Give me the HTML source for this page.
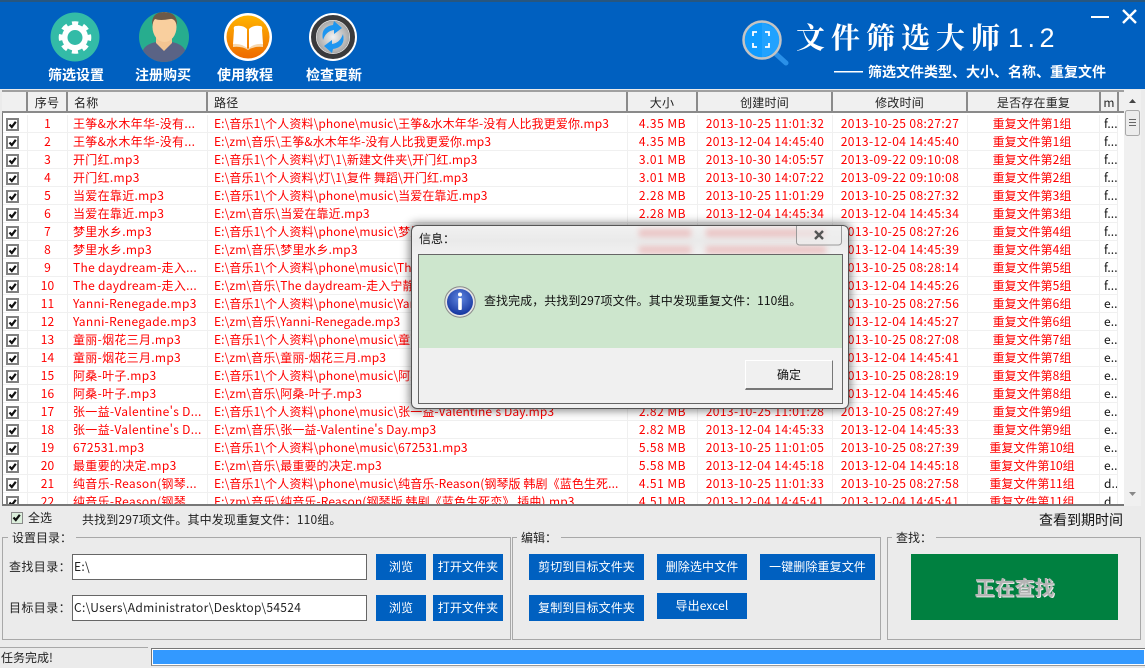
<!DOCTYPE html>
<html lang="zh"><head><meta charset="utf-8"><title>文件筛选大师</title>
<style>
*{box-sizing:border-box}
html,body{margin:0;padding:0;width:1145px;height:666px;overflow:hidden;background:#ebebeb;font-family:"Noto Sans CJK SC","Liberation Sans",sans-serif;font-size:12px;color:#111}
.a{position:absolute;white-space:nowrap}
#hd{left:0;top:0;width:1145px;height:89px;background:#0060c0}
.nav{color:#fff;font-size:14px;font-weight:700;top:65px;line-height:20px}
#hl{left:2px;top:90px;width:1122px;height:23px;background:#f0f0f0;border-top:2px solid #a0a0a0;border-bottom:2px solid #8a8a8a}
.hc{top:0;height:19px;line-height:21px;font-size:12px;border-right:2px solid #8a8a8a;text-align:center;letter-spacing:.2px;color:#222}
#grid{left:2px;top:113px;width:1139px;height:393px;background:#fff;border-left:1px solid #777;border-bottom:2px solid #777;overflow:hidden}
table{position:absolute;left:0;top:2px;border-collapse:separate;border-spacing:0;table-layout:fixed;width:1115px;color:#f00;letter-spacing:.1px}
td{height:18px;padding:0 0 0 6px;line-height:16px;border-right:1px solid #f0f0f0;border-bottom:1px solid #f0f0f0;overflow:hidden;white-space:nowrap;font-size:12px}
td.c{text-align:center;padding-left:0}
td.k{color:#111;padding-left:4px}
td.b{padding:0}
td:nth-child(3){letter-spacing:.3px;padding-left:5px}
td:nth-child(4){padding-left:6px}
td:nth-child(5){letter-spacing:.5px}
td:nth-child(6),td:nth-child(7){letter-spacing:.4px}
td:nth-child(8){letter-spacing:0;padding-right:3px}
.cb{display:block;width:13px;height:13px;margin:1px 0 0 3px;border:2px solid #808080;background:#fff}
.cb svg{display:block}
#sb{left:1124px;top:90px;width:17px;height:416px;background:#f0f0f0}
.fs{border:1px solid #a8a8a8;height:103px;top:537px}
.lg{background:#ebebeb;padding:0 4px;line-height:16px;top:530px;color:#222}
.btn{background:#0060c0;color:#fff;text-align:center;height:26px;line-height:25px;letter-spacing:.1px}
.inp{left:72px;width:295px;height:26px;border:1px solid #666;background:#fff;line-height:24px;padding-left:1px;letter-spacing:.3px;color:#222}
#dlg{left:411px;top:225px;width:438px;height:184px;border:1px solid #555;border-radius:6px;background:linear-gradient(#f1f1f1,#eaeaea 15px,#f1f1f1 29px);box-shadow:0 0 9px 2px rgba(0,0,0,.45);overflow:hidden}
.bl{background:#e9a4a4;filter:blur(3px);height:8px;opacity:.55}
</style></head><body>
<div class="a" style="left:0;top:0;width:1145px;height:2px;background:#27567f"></div>
<div class="a" id="hd" style="top:2px;height:87px"></div>

<svg class="a" style="left:0;top:0" width="1145" height="89" viewBox="0 0 1145 89">
<circle cx="75" cy="37" r="24.5" fill="#33bba7"/>
<circle cx="75" cy="37.5" r="10.3" fill="none" stroke="#fff" stroke-width="5.6"/>
<circle cx="75" cy="37.5" r="14.5" fill="none" stroke="#fff" stroke-width="3.6" stroke-dasharray="6.2 5.19" stroke-dashoffset="3.1"/>

<clipPath id="pc"><circle cx="164" cy="37" r="25"/></clipPath>
<circle cx="164" cy="37" r="25" fill="#27ad8e"/>
<g clip-path="url(#pc)">
<path d="M142 66 L143 50 Q146 44 156 42 L164 50 L172 42 Q182 44 185 50 L186 66Z" fill="#5a6385"/>
<path d="M156 36 L156 43 L164 51 L172 43 L172 36Z" fill="#f4c592"/>
<ellipse cx="164.500" cy="27" rx="12" ry="15" fill="#f9cf9e"/>
<path d="M152 26 Q151 12 164 12 Q178 12 177 26 Q175 18 170 19 Q160 21 155 19 Q153 21 152 26Z" fill="#6d5a48"/>
</g>

<defs><linearGradient id="og" x1="0" y1="0" x2="0" y2="1"><stop offset="0" stop-color="#ffb400"/><stop offset="1" stop-color="#ee6a00"/></linearGradient>
<radialGradient id="gr"><stop offset="0" stop-color="#f2f2f2"/><stop offset="1" stop-color="#a8a8a8"/></radialGradient></defs>
<circle cx="248" cy="37" r="24" fill="#fff"/>
<circle cx="248" cy="37" r="21.500" fill="url(#og)"/>
<path d="M234 30 Q233 26 236 26 Q243 25 247 29 L247 48 Q242 45 235 46 Q233 46 233 44Z M249 29 Q253 25 260 26 Q263 26 262 30 L263 44 Q263 46 261 46 Q254 45 249 48Z" fill="#fff"/>
<path d="M233 44 Q242 43 248 49 Q254 43 263 44 L263 47 Q254 46 248 50 Q242 46 233 47Z" fill="#f6d8b0"/>

<circle cx="333" cy="37" r="24" fill="#fff"/>
<circle cx="333" cy="37" r="19.500" fill="none" stroke="#3a3a3c" stroke-width="5"/>
<circle cx="333" cy="37" r="16.500" fill="url(#gr)"/>
<path d="M323 40 Q320 27 333 25 L334 21 L342 28 L334 34 L334 30 Q326 31 323 40Z" fill="#1e96f0"/>
<path d="M343 34 Q346 47 333 49 L332 53 L324 46 L332 40 L332 44 Q340 43 343 34Z" fill="#1e96f0"/>

<rect x="1091" y="16" width="18" height="2" fill="#fff"/>
<path d="M1123 10 L1136 23 M1136 10 L1123 23" stroke="#fff" stroke-width="2.4"/>

<path d="M776 54 L786 63" stroke="#2a90e8" stroke-width="5" stroke-linecap="round"/>
<circle cx="762" cy="40" r="18.500" fill="#0f9bff" stroke="#c4c4c4" stroke-width="2.500"/>
<path d="M762 22 L779 31 L779 50 L762 58Z" fill="#ffffff" opacity=".08"/>
<path d="M753 36 V32 H757 M765 32 H769 V36 M769 43 V47 H765 M757 47 H753 V43" fill="none" stroke="#fff" stroke-width="1.800"/>
<rect x="834" y="71" width="29" height="1.500" fill="#fff"/>
</svg>

<div class="a nav" style="left:48px">筛选设置</div>
<div class="a nav" style="left:135px">注册购买</div>
<div class="a nav" style="left:217px">使用教程</div>
<div class="a nav" style="left:306px">检查更新</div>
<div class="a" style="left:796px;top:17px;color:#fff;font-family:'Noto Serif CJK SC',serif;font-weight:700;font-size:29px;line-height:40px;letter-spacing:6px">文件筛选大师</div>
<div class="a" style="left:1008px;top:20px;color:#fff;font-family:'Liberation Sans',sans-serif;font-size:27px;line-height:36px;letter-spacing:4.500px">1.2</div>
<div class="a" style="left:868px;top:62px;color:#fff;font-weight:700;font-size:14px;line-height:20px">筛选文件类型、大小、名称、重复文件</div>

<div class="a" id="hl">
<div class="a hc" style="left:0;width:26px"></div>
<div class="a hc" style="left:26px;width:40px">序号</div>
<div class="a hc" style="left:66px;width:140px;text-align:left;padding-left:6px">名称</div>
<div class="a hc" style="left:206px;width:420px;text-align:left;padding-left:6px">路径</div>
<div class="a hc" style="left:626px;width:70px">大小</div>
<div class="a hc" style="left:696px;width:135px">创建时间</div>
<div class="a hc" style="left:831px;width:135px">修改时间</div>
<div class="a hc" style="left:966px;width:133px">是否存在重复</div>
<div class="a hc" style="left:1099px;width:18px">m</div>
</div>

<svg width="0" height="0" style="position:absolute"><defs><path id="ck" d="M1.500 4.500 L3.800 7 L7.800 1.800" fill="none" stroke="#111" stroke-width="2.200"/></defs></svg>

<div class="a" id="grid">
<table>
<colgroup><col style="width:25px"><col style="width:40px"><col style="width:140px"><col style="width:420px"><col style="width:70px"><col style="width:135px"><col style="width:135px"><col style="width:132px"><col style="width:18px"></colgroup>
<tr><td class="b"><span class="cb"><svg width="9" height="9"><use href="#ck"/></svg></span></td><td class="c">1</td><td>王筝&amp;水木年华-没有...</td><td>E:\音乐1\个人资料\phone\music\王筝&amp;水木年华-没有人比我更爱你.mp3</td><td class="c">4.35 MB</td><td class="c">2013-10-25 11:01:32</td><td class="c">2013-10-25 08:27:27</td><td class="c">重复文件第1组</td><td class="k">f...</td></tr>
<tr><td class="b"><span class="cb"><svg width="9" height="9"><use href="#ck"/></svg></span></td><td class="c">2</td><td>王筝&amp;水木年华-没有...</td><td>E:\zm\音乐\王筝&amp;水木年华-没有人比我更爱你.mp3</td><td class="c">4.35 MB</td><td class="c">2013-12-04 14:45:40</td><td class="c">2013-12-04 14:45:40</td><td class="c">重复文件第1组</td><td class="k">f...</td></tr>
<tr><td class="b"><span class="cb"><svg width="9" height="9"><use href="#ck"/></svg></span></td><td class="c">3</td><td>开门红.mp3</td><td>E:\音乐1\个人资料\灯\1\新建文件夹\开门红.mp3</td><td class="c">3.01 MB</td><td class="c">2013-10-30 14:05:57</td><td class="c">2013-09-22 09:10:08</td><td class="c">重复文件第2组</td><td class="k">f...</td></tr>
<tr><td class="b"><span class="cb"><svg width="9" height="9"><use href="#ck"/></svg></span></td><td class="c">4</td><td>开门红.mp3</td><td>E:\音乐1\个人资料\灯\1\复件 舞蹈\开门红.mp3</td><td class="c">3.01 MB</td><td class="c">2013-10-30 14:07:22</td><td class="c">2013-09-22 09:10:08</td><td class="c">重复文件第2组</td><td class="k">f...</td></tr>
<tr><td class="b"><span class="cb"><svg width="9" height="9"><use href="#ck"/></svg></span></td><td class="c">5</td><td>当爱在靠近.mp3</td><td>E:\音乐1\个人资料\phone\music\当爱在靠近.mp3</td><td class="c">2.28 MB</td><td class="c">2013-10-25 11:01:29</td><td class="c">2013-10-25 08:27:32</td><td class="c">重复文件第3组</td><td class="k">f...</td></tr>
<tr><td class="b"><span class="cb"><svg width="9" height="9"><use href="#ck"/></svg></span></td><td class="c">6</td><td>当爱在靠近.mp3</td><td>E:\zm\音乐\当爱在靠近.mp3</td><td class="c">2.28 MB</td><td class="c">2013-12-04 14:45:34</td><td class="c">2013-12-04 14:45:34</td><td class="c">重复文件第3组</td><td class="k">f...</td></tr>
<tr><td class="b"><span class="cb"><svg width="9" height="9"><use href="#ck"/></svg></span></td><td class="c">7</td><td>梦里水乡.mp3</td><td>E:\音乐1\个人资料\phone\music\梦里水乡.mp3</td><td class="c"></td><td class="c"></td><td class="c">2013-10-25 08:27:26</td><td class="c">重复文件第4组</td><td class="k">f...</td></tr>
<tr><td class="b"><span class="cb"><svg width="9" height="9"><use href="#ck"/></svg></span></td><td class="c">8</td><td>梦里水乡.mp3</td><td>E:\zm\音乐\梦里水乡.mp3</td><td class="c"></td><td class="c"></td><td class="c">2013-12-04 14:45:39</td><td class="c">重复文件第4组</td><td class="k">f...</td></tr>
<tr><td class="b"><span class="cb"><svg width="9" height="9"><use href="#ck"/></svg></span></td><td class="c">9</td><td>The daydream-走入...</td><td>E:\音乐1\个人资料\phone\music\The daydream</td><td class="c"></td><td class="c"></td><td class="c">2013-10-25 08:28:14</td><td class="c">重复文件第5组</td><td class="k">f...</td></tr>
<tr><td class="b"><span class="cb"><svg width="9" height="9"><use href="#ck"/></svg></span></td><td class="c">10</td><td>The daydream-走入...</td><td>E:\zm\音乐\The daydream-走入宁静</td><td class="c"></td><td class="c"></td><td class="c">2013-12-04 14:45:26</td><td class="c">重复文件第5组</td><td class="k">f...</td></tr>
<tr><td class="b"><span class="cb"><svg width="9" height="9"><use href="#ck"/></svg></span></td><td class="c">11</td><td>Yanni-Renegade.mp3</td><td>E:\音乐1\个人资料\phone\music\Yanni</td><td class="c"></td><td class="c"></td><td class="c">2013-10-25 08:27:56</td><td class="c">重复文件第6组</td><td class="k">e...</td></tr>
<tr><td class="b"><span class="cb"><svg width="9" height="9"><use href="#ck"/></svg></span></td><td class="c">12</td><td>Yanni-Renegade.mp3</td><td>E:\zm\音乐\Yanni-Renegade.mp3</td><td class="c"></td><td class="c"></td><td class="c">2013-12-04 14:45:27</td><td class="c">重复文件第6组</td><td class="k">e...</td></tr>
<tr><td class="b"><span class="cb"><svg width="9" height="9"><use href="#ck"/></svg></span></td><td class="c">13</td><td>童丽-烟花三月.mp3</td><td>E:\音乐1\个人资料\phone\music\童丽</td><td class="c"></td><td class="c"></td><td class="c">2013-10-25 08:27:08</td><td class="c">重复文件第7组</td><td class="k">e...</td></tr>
<tr><td class="b"><span class="cb"><svg width="9" height="9"><use href="#ck"/></svg></span></td><td class="c">14</td><td>童丽-烟花三月.mp3</td><td>E:\zm\音乐\童丽-烟花三月.mp3</td><td class="c"></td><td class="c"></td><td class="c">2013-12-04 14:45:41</td><td class="c">重复文件第7组</td><td class="k">e...</td></tr>
<tr><td class="b"><span class="cb"><svg width="9" height="9"><use href="#ck"/></svg></span></td><td class="c">15</td><td>阿桑-叶子.mp3</td><td>E:\音乐1\个人资料\phone\music\阿桑</td><td class="c"></td><td class="c"></td><td class="c">2013-10-25 08:28:19</td><td class="c">重复文件第8组</td><td class="k">e...</td></tr>
<tr><td class="b"><span class="cb"><svg width="9" height="9"><use href="#ck"/></svg></span></td><td class="c">16</td><td>阿桑-叶子.mp3</td><td>E:\zm\音乐\阿桑-叶子.mp3</td><td class="c"></td><td class="c"></td><td class="c">2013-12-04 14:45:46</td><td class="c">重复文件第8组</td><td class="k">e...</td></tr>
<tr><td class="b"><span class="cb"><svg width="9" height="9"><use href="#ck"/></svg></span></td><td class="c">17</td><td>张一益-Valentine's D...</td><td>E:\音乐1\个人资料\phone\music\张一益-Valentine's Day.mp3</td><td class="c">2.82 MB</td><td class="c">2013-10-25 11:01:28</td><td class="c">2013-10-25 08:27:49</td><td class="c">重复文件第9组</td><td class="k">e...</td></tr>
<tr><td class="b"><span class="cb"><svg width="9" height="9"><use href="#ck"/></svg></span></td><td class="c">18</td><td>张一益-Valentine's D...</td><td>E:\zm\音乐\张一益-Valentine's Day.mp3</td><td class="c">2.82 MB</td><td class="c">2013-12-04 14:45:33</td><td class="c">2013-12-04 14:45:33</td><td class="c">重复文件第9组</td><td class="k">e...</td></tr>
<tr><td class="b"><span class="cb"><svg width="9" height="9"><use href="#ck"/></svg></span></td><td class="c">19</td><td>672531.mp3</td><td>E:\音乐1\个人资料\phone\music\672531.mp3</td><td class="c">5.58 MB</td><td class="c">2013-10-25 11:01:05</td><td class="c">2013-10-25 08:27:39</td><td class="c">重复文件第10组</td><td class="k">e...</td></tr>
<tr><td class="b"><span class="cb"><svg width="9" height="9"><use href="#ck"/></svg></span></td><td class="c">20</td><td>最重要的决定.mp3</td><td>E:\zm\音乐\最重要的决定.mp3</td><td class="c">5.58 MB</td><td class="c">2013-12-04 14:45:18</td><td class="c">2013-12-04 14:45:18</td><td class="c">重复文件第10组</td><td class="k">e...</td></tr>
<tr><td class="b"><span class="cb"><svg width="9" height="9"><use href="#ck"/></svg></span></td><td class="c">21</td><td>纯音乐-Reason(钢琴...</td><td>E:\音乐1\个人资料\phone\music\纯音乐-Reason(钢琴版 韩剧《蓝色生死...</td><td class="c">4.51 MB</td><td class="c">2013-10-25 11:01:33</td><td class="c">2013-10-25 08:27:58</td><td class="c">重复文件第11组</td><td class="k">d...</td></tr>
<tr><td class="b"><span class="cb"><svg width="9" height="9"><use href="#ck"/></svg></span></td><td class="c">22</td><td>纯音乐-Reason(钢琴...</td><td>E:\zm\音乐\纯音乐-Reason(钢琴版 韩剧《蓝色生死恋》 插曲).mp3</td><td class="c">4.51 MB</td><td class="c">2013-12-04 14:45:41</td><td class="c">2013-12-04 14:45:41</td><td class="c">重复文件第11组</td><td class="k">d...</td></tr>
</table>
</div>

<div class="a" id="sb"></div>
<svg class="a" style="left:1124px;top:90px" width="17" height="416">
<path d="M5 13 L8.500 9 L12 13Z" fill="#444"/>
<rect x="1.500" y="20.500" width="14" height="25" rx="2" fill="#ececec" stroke="#a8a8a8"/>
<path d="M5 29.500H12M5 32.500H12M5 35.500H12" stroke="#666"/>
<path d="M5 402 L8.500 406 L12 402Z" fill="#888"/>
</svg>

<div class="a" style="left:11px;top:512px;width:12px;height:12px;border:1px solid #8a8a8a;background:#dcefdc"><svg width="10" height="10" style="display:block"><use href="#ck"/></svg></div>
<div class="a" style="left:28px;top:510px;line-height:16px;color:#222">全选</div>
<div class="a" style="left:82px;top:512px;line-height:16px;letter-spacing:.15px;color:#222">共找到297项文件。其中发现重复文件：110组。</div>
<div class="a" style="left:1039px;top:512px;line-height:16px;font-size:14px;color:#111">查看到期时间</div>

<div class="a fs" style="left:2px;width:509px"></div>
<div class="a lg" style="left:8px">设置目录：</div>
<div class="a" style="left:9px;top:559px;line-height:16px;color:#222;letter-spacing:.4px">查找目录：</div>
<div class="a" style="left:9px;top:600px;line-height:16px;color:#222;letter-spacing:.4px">目标目录：</div>
<div class="a inp" style="top:554px">E:\</div>
<div class="a inp" style="top:595px">C:\Users\Administrator\Desktop\54524</div>
<div class="a btn" style="left:376px;top:554px;width:50px">浏览</div>
<div class="a btn" style="left:433px;top:554px;width:70px">打开文件夹</div>
<div class="a btn" style="left:376px;top:595px;width:50px">浏览</div>
<div class="a btn" style="left:433px;top:595px;width:70px">打开文件夹</div>

<div class="a fs" style="left:512px;width:369px"></div>
<div class="a lg" style="left:517px">编辑：</div>
<div class="a btn" style="left:529px;top:554px;width:115px">剪切到目标文件夹</div>
<div class="a btn" style="left:657px;top:554px;width:90px">删除选中文件</div>
<div class="a btn" style="left:760px;top:554px;width:115px">一键删除重复文件</div>
<div class="a btn" style="left:529px;top:595px;width:115px">复制到目标文件夹</div>
<div class="a btn" style="left:657px;top:593px;width:90px">导出excel</div>

<div class="a fs" style="left:887px;width:254px"></div>
<div class="a lg" style="left:892px">查找：</div>
<div class="a" style="left:911px;top:554px;width:207px;height:66px;background:#008040;color:#b4b4b4;font-size:20px;font-weight:700;text-align:center;line-height:66px;text-shadow:1px 1px 0 #e8e8e8">正在查找</div>

<div class="a" style="left:0;top:647px;width:148px;height:19px;border-top:1px solid #a8a8a8;line-height:20px;color:#222;padding-left:1px">任务完成!</div>
<div class="a" style="left:151px;top:648px;width:994px;height:18px;border:1px solid #777;border-right:0;border-bottom:1px solid #999;padding:1px;background:#fff"><div style="width:100%;height:14px;background:#3399ff"></div></div>

<div class="a" id="dlg">
<div class="a bl" style="left:227px;top:3px;width:52px"></div>
<div class="a bl" style="left:294px;top:3px;width:120px"></div>
<div class="a bl" style="left:227px;top:20px;width:52px"></div>
<div class="a bl" style="left:294px;top:20px;width:120px"></div>
<div class="a" style="left:7px;top:5px;line-height:16px;color:#111">信息：</div>
<svg class="a" style="left:384px;top:-1px" width="46" height="21"><rect x=".5" y="-3" width="45" height="23" rx="3" fill="#eee" fill-opacity=".6" stroke="#9a9a9a"/><path d="M19 6 L27 14 M27 6 L19 14" stroke="#555" stroke-width="2.400"/></svg>
<div class="a" style="left:6px;top:28px;width:425px;height:150px;border:1px solid #666;background:#f0f0f0">
<div class="a" style="left:0;top:0;width:423px;height:93px;background:#cde6cd"></div>
<svg class="a" style="left:25px;top:31px" width="32" height="32">
<defs><radialGradient id="ib" cx=".5" cy=".35" r=".7"><stop offset="0" stop-color="#5f86e0"/><stop offset="1" stop-color="#0f2f9a"/></radialGradient></defs>
<circle cx="16" cy="16" r="15.200" fill="#e6e6e6" stroke="#8a8a8a"/><circle cx="16" cy="16" r="13" fill="url(#ib)"/>
<circle cx="16" cy="8.500" r="2" fill="#fff"/><rect x="14.200" y="12" width="3.600" height="12" rx="1" fill="#fff"/></svg>
<div class="a" style="left:65px;top:37px;line-height:18px;color:#111;letter-spacing:.05px">查找完成，共找到297项文件。其中发现重复文件：110组。</div>
<div class="a" style="left:326px;top:105px;width:88px;height:30px;background:#f0f0f0;border:1px solid #fff;border-right:1px solid #777;border-bottom:2px solid #777;text-align:center;line-height:27px;color:#111">确定</div>
</div>
</div>
</body></html>
